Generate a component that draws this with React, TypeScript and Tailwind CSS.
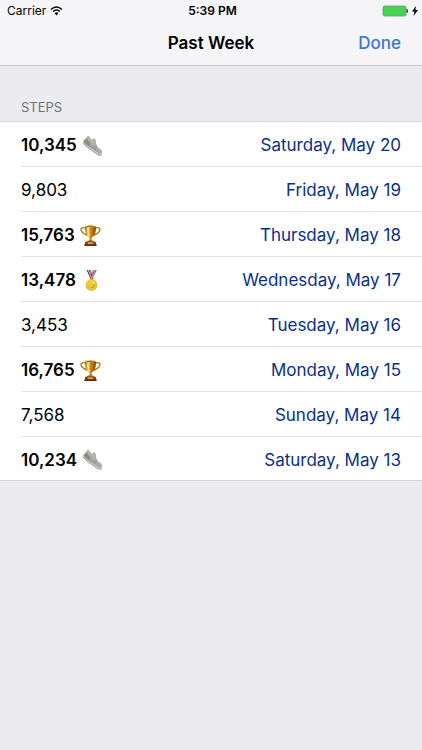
import type { ReactNode } from "react";

type Award = "shoe" | "trophy" | "medal";

type Day = {
  steps: string;
  date: string;
  award?: Award;
};

const days: Day[] = [
  { steps: "10,345", date: "Saturday, May 20", award: "shoe" },
  { steps: "9,803", date: "Friday, May 19" },
  { steps: "15,763", date: "Thursday, May 18", award: "trophy" },
  { steps: "13,478", date: "Wednesday, May 17", award: "medal" },
  { steps: "3,453", date: "Tuesday, May 16" },
  { steps: "16,765", date: "Monday, May 15", award: "trophy" },
  { steps: "7,568", date: "Sunday, May 14" },
  { steps: "10,234", date: "Saturday, May 13", award: "shoe" },
];

function Shoe() {
  return (
    <svg viewBox="0 0 63 63" className="size-[21px]" role="img" aria-label="Running shoe">
      <path d="M3 20 L17 3 Q22 2 24 8 L28 13 Q34 16 35 10 L40 13 L43 29 Q46 38 58 44 Q62 51 58 60 Q52 62 45 57 L17 37 Q5 28 3 20Z" fill="#a19e9a" />
      <path d="M17 3 Q22 2 24 8 L28 13 Q34 16 35 10 L40 13 L42 24 L29 27 L15 12Z" fill="#b9b7b3" />
      <path d="M13 11 L25 25 L20 34 L6 19Z" fill="#8b8884" />
      <path d="M25 17 L40 20 L43 30 L35 38 L24 29Z" fill="#aaa7a3" />
      <path d="M29 20 L40 25 M28 26 L41 31" stroke="#c9c7c3" strokeWidth="2" />
      <path d="M43 38 Q52 42 57 45 Q60 50 56 54 L43 47Z" fill="#b0aeaa" />
      <path d="M3 19 Q7 27 19 34 L48 53 Q54 56 59 55 L58 60 Q52 63 44 57 L17 38 Q3 28 3 19Z" fill="#cfcdca" />
      <path d="M3 23 Q7 31 18 38 L44 57 Q52 62 58 60" fill="none" stroke="#7b7875" strokeWidth="2" />
    </svg>
  );
}

function Trophy() {
  return (
    <svg viewBox="0 0 63 63" className="size-[21px]" role="img" aria-label="Trophy">
      <defs>
        <linearGradient id="trophy-gold">
          <stop offset="0" stopColor="#9a620b" />
          <stop offset=".3" stopColor="#ffe27a" />
          <stop offset=".5" stopColor="#c9891a" />
          <stop offset=".75" stopColor="#a86c10" />
          <stop offset="1" stopColor="#744405" />
        </linearGradient>
      </defs>
      <path d="M17 9 C5 5 0 12 5 19 C9 26 15 28 24 31 M46 9 C58 5 63 12 58 19 C54 26 48 28 39 31" fill="none" stroke="#b0761b" strokeWidth="4" />
      <path d="M15 3 H48 C48 22 45 32 36 37 C34 41 34 43 37 48 H26 C29 43 29 41 27 37 C18 32 15 22 15 3Z" fill="url(#trophy-gold)" />
      <ellipse cx="31.5" cy="4" rx="16.5" ry="3" fill="#e9bd54" />
      <ellipse cx="31.5" cy="4" rx="13" ry="1.5" fill="#8c5a11" />
      <path d="M23 10 Q23 24 29 33" fill="none" stroke="#fff0a3" strokeWidth="2" />
      <path d="M22 48 Q31 43 41 48 L44 51 H19Z" fill="#a96711" />
      <path d="M16 50 H47 L49 60 H14Z" fill="#7d3c17" />
      <path d="M23 52 H40 V57 H23Z" fill="#e0ab48" />
      <path d="M13 59 H50 V63 H13Z" fill="#5e2c14" />
    </svg>
  );
}

function Medal() {
  return (
    <svg viewBox="0 0 63 63" className="size-[21px]" role="img" aria-label="Medal">
      <path d="M17 0 H29 L37 26 H28Z" fill="#293c7d" />
      <path d="M21 0 H27 L35 26 H30Z" fill="#eeeef4" />
      <path d="M23 0 H26 L34 26 H31Z" fill="#cf3840" />
      <path d="M47 0 H36 L27 26 H35Z" fill="#354889" />
      <path d="M44 0 H38 L29 26 H34Z" fill="#f3eef1" />
      <path d="M42 0 H39 L30 26 H33Z" fill="#cf3840" />
      <path d="M28 23 H36 L38 30 H26Z" fill="#b88923" />
      <circle cx="31.5" cy="45" r="17.5" fill="#c99312" />
      <circle cx="31.5" cy="44" r="16" fill="#f5d13c" />
      <circle cx="31.5" cy="45" r="12" fill="#e6bc28" />
      <path d="M22 43 Q28 32 40 37 M25 52 L39 40" fill="none" stroke="#fff08a" strokeWidth="3" />
      <path d="M28 53 Q39 52 41 44" fill="none" stroke="#bb8512" strokeWidth="2" />
    </svg>
  );
}

const awards: Record<Award, ReactNode> = {
  shoe: <Shoe />,
  trophy: <Trophy />,
  medal: <Medal />,
};

function StatusBar() {
  return (
    <div className="grid h-[22px] grid-cols-3 items-center pr-1 pl-[7px] text-xs">
      <div className="flex items-center gap-1">
        <span>Carrier</span>
        <svg viewBox="0 0 26 20" className="h-[10px] w-[13px]" aria-hidden="true">
          <path d="M2 7 Q13 -3 24 7 M6 11 Q13 5 20 11" fill="none" stroke="#000" strokeWidth="3" />
          <path d="M9 14 Q13 11 17 14 L13 19Z" />
        </svg>
      </div>
      <span className="text-center font-semibold">5:39 PM</span>
      <div className="flex items-center justify-end gap-1">
        <svg viewBox="0 0 26 12" className="h-3 w-[26px]" aria-hidden="true">
          <rect x="1" y="1" width="23" height="10" rx="1.5" fill="#43d551" stroke="#7b917d" strokeWidth=".8" />
          <path d="M24.5 4 Q26 4 26 6 Q26 8 24.5 8Z" fill="#222" />
        </svg>
        <svg viewBox="0 0 6 10" className="h-[10px] w-[6px]" aria-hidden="true">
          <path d="M4 0 L0 5.5 H2.5 L1.5 10 L6 4 H3.4Z" />
        </svg>
      </div>
    </div>
  );
}

export default function App() {
  return (
    <div className="min-h-screen bg-[#ebebf0] font-['Inter','Liberation_Sans',sans-serif] text-black">
      <header className="border-b border-[#c7c6cc] bg-[#f5f5f7]">
        <StatusBar />
        <nav className="grid h-[43px] grid-cols-3 items-center px-[21px]">
          <h1 className="col-start-2 text-center text-[17px] font-semibold">Past Week</h1>
          <button type="button" className="justify-self-end text-[17px] font-medium text-[#3e78d1]">
            Done
          </button>
        </nav>
      </header>

      <main>
        <h2 className="px-[21px] pt-[31px] pb-1 text-[13px] leading-5 text-[#717176]">STEPS</h2>
        <ul className="border-y border-[#d5d5da] bg-white pl-[21px] text-[17px] leading-6">
          {days.map((day) => (
            <li
              key={day.date}
              className="flex h-[45px] items-center justify-between border-b border-[#e2e2e5] pt-0.5 pr-[21px] last:h-[43px] last:border-b-0"
            >
              <div className="flex items-center gap-[5px]">
                <span className={day.award ? "font-semibold" : ""}>{day.steps}</span>
                {day.award && awards[day.award]}
              </div>
              <span className="text-[#08308b]">{day.date}</span>
            </li>
          ))}
        </ul>
      </main>
    </div>
  );
}
